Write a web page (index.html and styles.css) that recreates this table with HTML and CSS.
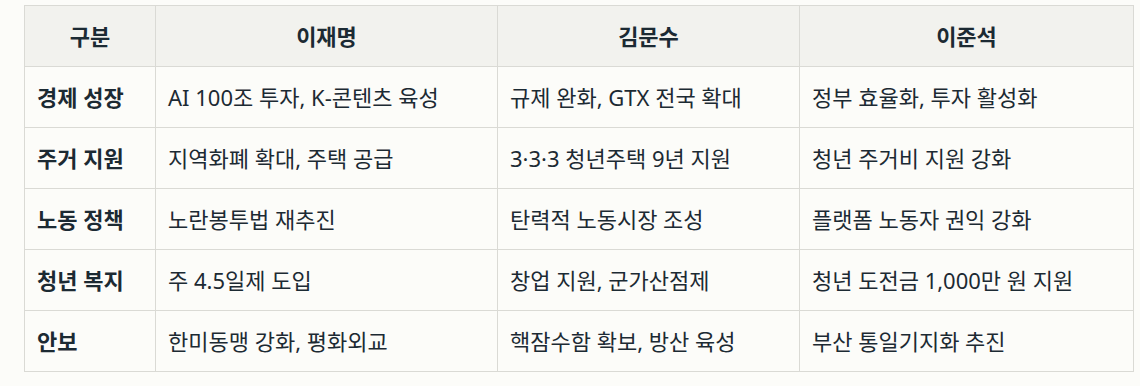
FILE: index.html
```html
<!DOCTYPE html>
<html lang="ko">
<head>
    <meta charset="UTF-8">
    <meta name="viewport" content="width=device-width, initial-scale=1.0">
    <title>후보별 공약 비교</title>
    <link rel="stylesheet" href="styles.css">
</head>
<body>

<div class="wrap">
    <table class="compare">
        <colgroup>
            <col class="c-topic">
            <col class="c-lee">
            <col class="c-kim">
            <col class="c-ljs">
        </colgroup>
        <thead>
            <tr>
                <th>구분</th>
                <th>이재명</th>
                <th>김문수</th>
                <th>이준석</th>
            </tr>
        </thead>
        <tbody>
            <tr>
                <td class="topic">경제 성장</td>
                <td>AI 100조 투자, K-콘텐츠 육성</td>
                <td>규제 완화, GTX 전국 확대</td>
                <td>정부 효율화, 투자 활성화</td>
            </tr>
            <tr>
                <td class="topic">주거 지원</td>
                <td>지역화폐 확대, 주택 공급</td>
                <td>3·3·3 청년주택 9년 지원</td>
                <td>청년 주거비 지원 강화</td>
            </tr>
            <tr>
                <td class="topic">노동 정책</td>
                <td>노란봉투법 재추진</td>
                <td>탄력적 노동시장 조성</td>
                <td>플랫폼 노동자 권익 강화</td>
            </tr>
            <tr>
                <td class="topic">청년 복지</td>
                <td>주 4.5일제 도입</td>
                <td>창업 지원, 군가산점제</td>
                <td>청년 도전금 1,000만 원 지원</td>
            </tr>
            <tr>
                <td class="topic">안보</td>
                <td>한미동맹 강화, 평화외교</td>
                <td>핵잠수함 확보, 방산 육성</td>
                <td>부산 통일기지화 추진</td>
            </tr>
        </tbody>
    </table>
</div>

</body>
</html>
```

FILE: styles.css
```css
:root { --bg: #fcfcf9; --head: #f2f2ee; --line: #dadad5; --ink: #1c2a33; }
body { margin: 0; background: var(--bg); color: var(--ink); font-family: "Noto Sans", "Noto Sans CJK KR", sans-serif; }
.wrap { padding: 5px 7px 0 24px; }

.compare { width: 1109px; border-collapse: collapse; table-layout: fixed; font-size: 22px; }
.c-topic { width: 131px; }
.c-lee { width: 342px; }
.c-kim { width: 302px; }
.c-ljs { width: 334px; }

.compare th, .compare td { border: 1px solid var(--line); height: 61px; padding: 0 12px; vertical-align: middle; box-sizing: border-box; line-height: 1.2; }
.compare th { background: var(--head); font-weight: 700; text-align: center; }
.compare td { text-align: left; font-weight: 400; }
.compare td.topic { font-weight: 700; }
```
